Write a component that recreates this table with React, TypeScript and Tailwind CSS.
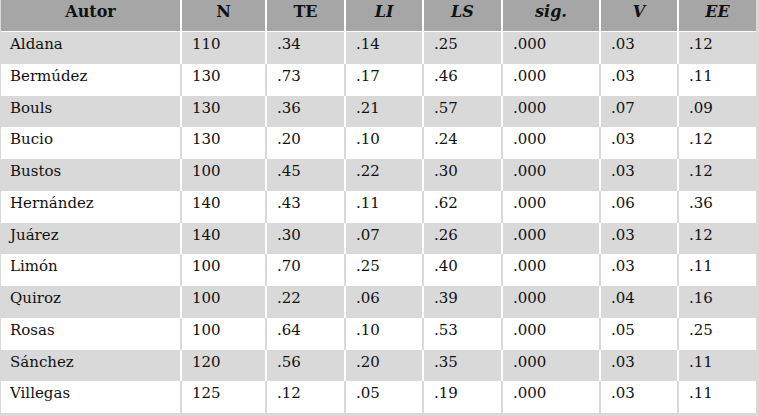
import React from 'react';

// Types
interface Row {
    autor: string;
    n: string;
    te: string;
    li: string;
    ls: string;
    sig: string;
    v: string;
    ee: string;
}

const rows: Row[] = [
    { autor: 'Aldana', n: '110', te: '.34', li: '.14', ls: '.25', sig: '.000', v: '.03', ee: '.12' },
    { autor: 'Bermúdez', n: '130', te: '.73', li: '.17', ls: '.46', sig: '.000', v: '.03', ee: '.11' },
    { autor: 'Bouls', n: '130', te: '.36', li: '.21', ls: '.57', sig: '.000', v: '.07', ee: '.09' },
    { autor: 'Bucio', n: '130', te: '.20', li: '.10', ls: '.24', sig: '.000', v: '.03', ee: '.12' },
    { autor: 'Bustos', n: '100', te: '.45', li: '.22', ls: '.30', sig: '.000', v: '.03', ee: '.12' },
    { autor: 'Hernández', n: '140', te: '.43', li: '.11', ls: '.62', sig: '.000', v: '.06', ee: '.36' },
    { autor: 'Juárez', n: '140', te: '.30', li: '.07', ls: '.26', sig: '.000', v: '.03', ee: '.12' },
    { autor: 'Limón', n: '100', te: '.70', li: '.25', ls: '.40', sig: '.000', v: '.03', ee: '.11' },
    { autor: 'Quiroz', n: '100', te: '.22', li: '.06', ls: '.39', sig: '.000', v: '.04', ee: '.16' },
    { autor: 'Rosas', n: '100', te: '.64', li: '.10', ls: '.53', sig: '.000', v: '.05', ee: '.25' },
    { autor: 'Sánchez', n: '120', te: '.56', li: '.20', ls: '.35', sig: '.000', v: '.03', ee: '.11' },
    { autor: 'Villegas', n: '125', te: '.12', li: '.05', ls: '.19', sig: '.000', v: '.03', ee: '.11' },
];

// column widths, right separator included
const widths = ['w-[181px]', 'w-[85px]', 'w-[79px]', 'w-[78px]', 'w-[79px]', 'w-[98px]', 'w-[78px]', 'w-[77px]'];

const headers: { label: string; italic: boolean }[] = [
    { label: 'Autor', italic: false },
    { label: 'N', italic: false },
    { label: 'TE', italic: false },
    { label: 'LI', italic: true },
    { label: 'LS', italic: true },
    { label: 'sig.', italic: true },
    { label: 'V', italic: true },
    { label: 'EE', italic: true },
];

const App: React.FC = () => {
    return (
        <div
            className="w-[759px] h-[416px] bg-white text-[15px] text-[#111111] overflow-hidden"
            style={{ fontFamily: '"DejaVu Serif", serif' }}
        >
            <div className="border-l border-r-[3px] border-b-[3px] border-[#d9d9d9]">
                {/* Header */}
                <div className="flex h-[32px] bg-[#a6a6a6] border-b border-white">
                    {headers.map((h, i) => (
                        <div
                            key={h.label}
                            className={`${widths[i]} ${i < 7 ? 'border-r-2 border-white' : ''} pt-[2px] text-[16px] leading-[19px] text-center font-bold ${h.italic ? 'italic' : ''}`}
                        >
                            {h.label}
                        </div>
                    ))}
                </div>

                {/* Body */}
                {rows.map((r, idx) => {
                    const shaded = idx % 2 === 0;
                    const cells = [r.autor, r.n, r.te, r.li, r.ls, r.sig, r.v, r.ee];
                    return (
                        <div
                            key={r.autor}
                            className={`flex h-[31.75px] ${shaded ? 'bg-[#d9d9d9]' : 'bg-white'}`}
                        >
                            {cells.map((c, i) => (
                                <div
                                    key={i}
                                    className={`${widths[i]} ${i < 7 ? (shaded ? 'border-r-2 border-white' : 'border-r-2 border-[#d9d9d9]') : ''} ${i === 0 ? 'pl-[9px]' : 'pl-[10px]'} pt-[3px] leading-[18px]`}
                                >
                                    {c}
                                </div>
                            ))}
                        </div>
                    );
                })}
            </div>
        </div>
    );
};

export default App;
